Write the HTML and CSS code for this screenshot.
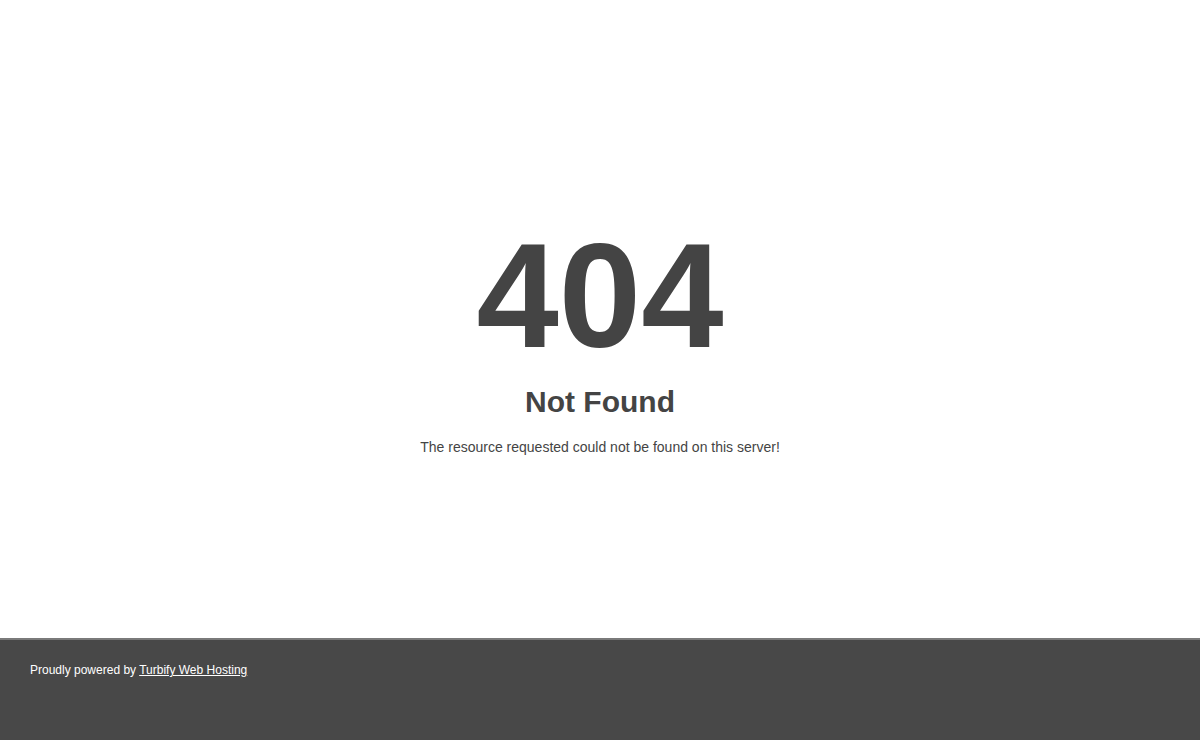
FILE: index.html
```html
<!DOCTYPE html>
<html lang="en">
<head>
<meta charset="utf-8">
<title>404 Not Found</title>
<link rel="stylesheet" href="styles.css">
</head>
<body>
<main class="main">
  <h1 class="code">404</h1>
  <h2 class="title">Not Found</h2>
  <p class="message">The resource requested could not be found on this server!</p>
</main>
<footer class="footer">
  <p class="footer-text">Proudly powered by <a class="footer-link" href="#">Turbify Web Hosting</a></p>
</footer>
</body>
</html>
```

FILE: styles.css
```css
html, body {
  margin: 0;
  padding: 0;
  background: #ffffff;
  font-family: "Liberation Sans", Arial, sans-serif;
  color: #444444;
}

.main {
  height: 638px;
  box-sizing: border-box;
  padding-top: 222px;
  display: flex;
  flex-direction: column;
  align-items: center;
}

.code {
  margin: 0;
  font-size: 148px;
  line-height: 148px;
  font-weight: bold;
  color: #444444;
}

.title {
  margin: 17px 0 0;
  font-size: 30px;
  line-height: 30px;
  font-weight: bold;
  color: #444444;
}

.message {
  margin: 23px 0 0;
  font-size: 14px;
  line-height: 14px;
  color: #444444;
}

.footer {
  height: 102px;
  box-sizing: border-box;
  background: #484848;
  border-top: 2px solid #7a7a7a;
  padding: 23px 30px 0;
}

.footer-text {
  margin: 0;
  font-size: 12px;
  line-height: 14px;
  color: #ffffff;
}

.footer-link {
  color: #ffffff;
  text-decoration: underline;
}
```
